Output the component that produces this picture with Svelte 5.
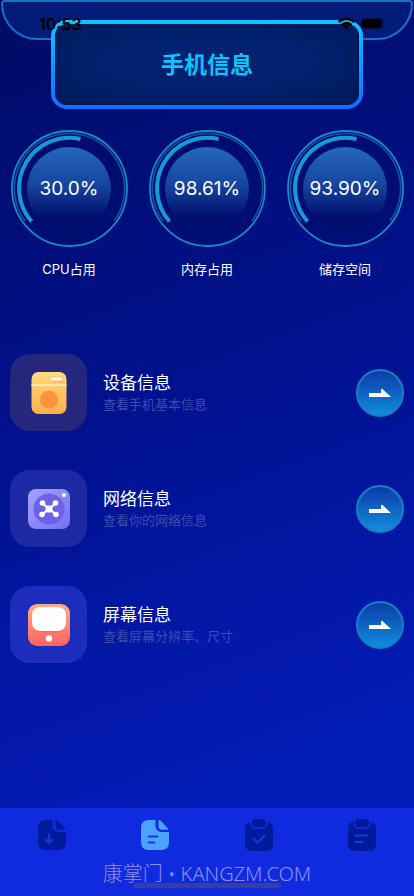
<script>
  const gauges = [
    { value: "30.0%", label: "CPU占用" },
    { value: "98.61%", label: "内存占用" },
    { value: "93.90%", label: "储存空间" },
  ];
  const items = [
    { icon: "device", title: "设备信息", text: "查看手机基本信息" },
    { icon: "network", title: "网络信息", text: "查看你的网络信息" },
    { icon: "screen", title: "屏幕信息", text: "查看屏幕分辨率、尺寸" },
  ];
  const tabs = [
    { icon: "download", label: "下载" },
    { icon: "file", label: "信息" },
    { icon: "check", label: "任务" },
    { icon: "list", label: "清单" },
  ];
  let active = $state("file");
</script>

<div class="page">
  <header>
    <div class="panel"></div>
    <h1>手机信息</h1>
    <div class="status">
      <span class="time">10:53</span>
      <svg width="76" height="14" viewBox="0 0 76 14">
        <g opacity="0.35">
          <circle cx="5" cy="10" r="1" />
          <circle cx="10" cy="10" r="1" />
          <circle cx="15" cy="10" r="1" />
          <circle cx="20" cy="10" r="1" />
        </g>
        <g fill="none" stroke="#000" stroke-width="2.4">
          <path d="M27.500 5Q35.500 -1.500 43.500 5" />
          <path d="M30.500 8Q35.500 4 40.500 8" />
        </g>
        <path d="M33 9.500Q35.500 7.800 38 9.500L35.500 12.500Z" />
        <rect x="50.500" y="1.500" width="22" height="10" rx="3" fill="none" stroke="#000" stroke-opacity="0.35" />
        <rect x="51" y="2" width="20" height="9" rx="2" />
        <path d="M74 5v4q2-2 0-4z" opacity="0.35" />
      </svg>
    </div>
  </header>

  <section class="gauges">
    {#each gauges as gauge}
      <div class="gauge">
        <div class="dial">
          <svg viewBox="0 0 117 117" fill="none">
            <circle cx="58.5" cy="58.5" r="57.5" stroke="#148bc8" stroke-width="1.8" />
            <path d="M14 91A55 55 0 0 1 58.500 3.500A55 55 0 0 1 103 91" stroke="#2873b8" stroke-opacity="0.65" stroke-width="1.6" />
            <path d="M20.500 91.500A50.500 50.500 0 0 1 69.500 9" stroke="#149bd6" stroke-width="4" />
          </svg>
          <span class="value">{gauge.value}</span>
        </div>
        <span class="name">{gauge.label}</span>
      </div>
    {/each}
  </section>

  <ul class="list">
    {#each items as item}
      <li>
        <div class="tile {item.icon}">
          <svg width="42" height="42" viewBox="0 0 42 42">
            {#if item.icon === "device"}
              <defs>
                <linearGradient id="yellow" x1="0" y1="0" x2="0" y2="1">
                  <stop offset="0" stop-color="#ffda7c" />
                  <stop offset="1" stop-color="#fcb14c" />
                </linearGradient>
              </defs>
              <rect x="3.500" width="35" height="42" rx="7" fill="url(#yellow)" />
              <path d="M3.500 13.200h35" stroke="#ffefc4" stroke-width="1.8" />
              <rect x="24" y="8" width="11" height="3" fill="#f9ae4a" opacity="0.5" />
              <rect x="23.500" y="5.500" width="10" height="3" rx="0.6" fill="#fff8e8" />
              <circle cx="21" cy="27.500" r="9" fill="#ff923e" />
            {:else if item.icon === "network"}
              <defs>
                <linearGradient id="purple" x1="0" y1="0" x2="1" y2="1">
                  <stop offset="0" stop-color="#a6a1ff" />
                  <stop offset="1" stop-color="#7470f4" />
                </linearGradient>
              </defs>
              <rect y="1" width="42" height="40" rx="8" fill="url(#purple)" />
              <circle cx="21" cy="21" r="15.500" fill="#6c62e8" />
              <circle cx="36" cy="7" r="2" fill="#fff" />
              <g stroke="#fff" stroke-width="2.200">
                <path d="M14 15L28 26.500M28 15L14 26.500" />
              </g>
              <g fill="#fff">
                <rect x="17.500" y="17.500" width="7" height="7" rx="2" />
                <circle cx="14.500" cy="15" r="2.800" />
                <circle cx="27.500" cy="15" r="2.800" />
                <circle cx="14" cy="26.500" r="2.800" />
                <circle cx="28" cy="26.500" r="2.800" />
              </g>
            {:else}
              <defs>
                <linearGradient id="coral" x1="0" y1="0" x2="0" y2="1">
                  <stop offset="0" stop-color="#ffac86" />
                  <stop offset="1" stop-color="#ff6260" />
                </linearGradient>
              </defs>
              <rect width="42" height="42" rx="9" fill="url(#coral)" />
              <rect x="4.500" y="4.500" width="33" height="24" rx="8" fill="#f35442" opacity="0.45" />
              <rect x="4" y="3" width="34" height="24" rx="8" fill="#fff" />
              <circle cx="21" cy="34.500" r="3.200" fill="#fff" />
            {/if}
          </svg>
        </div>
        <div class="info">
          <h2>{item.title}</h2>
          <p>{item.text}</p>
        </div>
        <button class="go" aria-label={item.title}>
          <svg width="22" height="10" viewBox="0 0 22 10" fill="#fff">
            <path d="M0 5H12V1.500Q13 0 14.500 2L22 9H0Z" />
          </svg>
        </button>
      </li>
    {/each}
  </ul>

  <nav>
    {#each tabs as tab}
      <button
        class="tab"
        class:active={active === tab.icon}
        aria-label={tab.label}
        onclick={() => (active = tab.icon)}
      >
        <svg width="30" height="32" viewBox="0 0 30 32">
          {#if tab.icon === "download" || tab.icon === "file"}
            <path
              fill="currentColor"
              d="M9 1H15.500V6.500Q15.500 13 22 13H29V23Q29 31 21 31H9Q1 31 1 23V9Q1 1 9 1Z"
            />
            <path fill="currentColor" d="M18.500 1.500Q20 1 21 2L28 9.500Q28.500 10.500 27.500 10.800H22Q18.500 10.800 18.500 7Z" />
          {:else}
            <path
              fill="currentColor"
              d="M6 3Q6 10 12 10H18Q24 10 24 3Q29 4 29 10V25Q29 32 22 32H8Q1 32 1 25V10Q1 4 6 3Z"
            />
            <rect x="8" width="14" height="8" rx="3.500" fill="currentColor" />
          {/if}
          <g class="mark">
            {#if tab.icon === "download"}
              <path d="M12 15V24M8.500 20.500L12 24L15.500 20.500" />
            {:else if tab.icon === "file"}
              <path d="M8.500 17.500H17.500M8.500 23.500H14.500" />
            {:else if tab.icon === "check"}
              <path d="M10 20L13.500 23.500L20.500 16.500" />
            {:else}
              <path d="M8.500 16.500H20.500M8.500 23H15.500" />
            {/if}
          </g>
        </svg>
      </button>
    {/each}
    <div class="indicator"></div>
    <p class="brand">康掌门 • KANGZM.COM</p>
  </nav>
</div>

<style>
  :global(body) {
    margin: 0;
  }
  .page {
    min-height: 100vh;
    display: flex;
    flex-direction: column;
    color: #fff;
    font-family: Inter, "Noto Sans CJK SC", sans-serif;
    background: linear-gradient(160deg, #000b64 0%, #001290 45%, #041cb8 85%, #041cb8 100%);
  }
  h1,
  h2,
  p,
  ul {
    margin: 0;
    padding: 0;
    font-weight: 400;
  }
  header {
    position: relative;
    padding: 20px 51px 0;
  }
  .panel {
    position: absolute;
    inset: 0 1px auto;
    height: 40px;
    box-sizing: border-box;
    border: 2px solid #1471c8;
    border-radius: 4px 4px 38px 38px;
    background: #001c78;
  }
  h1 {
    position: relative;
    height: 89px;
    box-sizing: border-box;
    border: 4px solid transparent;
    border-radius: 16px;
    background:
      radial-gradient(ellipse, #02247880 40%, #001a5480 100%) padding-box,
      linear-gradient(#001f6c, #001c64) padding-box,
      linear-gradient(#12c4ff, #0f6cff) border-box;
    box-shadow: inset 0 0 14px #00104066;
    color: #0cc4fc;
    font-size: 23px;
    font-weight: 600;
    line-height: 82px;
    text-align: center;
  }
  .status {
    position: absolute;
    inset: 14px 27px auto 39px;
    display: flex;
    justify-content: space-between;
    align-items: center;
    color: #000;
  }
  .time {
    font-size: 16px;
    font-weight: 600;
    line-height: 20px;
  }
  .gauges {
    display: grid;
    grid-template-columns: repeat(3, 1fr);
    margin-top: 21px;
  }
  .gauge {
    display: flex;
    flex-direction: column;
    align-items: center;
    gap: 12px;
  }
  .dial {
    width: 117px;
    height: 117px;
    display: grid;
    place-items: center;
    border-radius: 50%;
    background: #000b6680;
  }
  .dial > * {
    grid-area: 1 / 1;
  }
  .dial svg {
    width: 100%;
  }
  .value {
    width: 84px;
    border-radius: 50%;
    background: linear-gradient(#2468b8, #1645a0 45%, #000d6c 85%);
    font-size: 19px;
    line-height: 84px;
    text-align: center;
  }
  .name {
    font-size: 13px;
    line-height: 20px;
  }
  .list {
    display: flex;
    flex-direction: column;
    gap: 39px;
    margin: 75px 10px 40px;
    list-style: none;
  }
  li {
    display: flex;
    align-items: center;
  }
  .tile {
    width: 77px;
    height: 77px;
    display: grid;
    place-items: center;
    border-radius: 20px;
  }
  .device {
    background: #24277c;
  }
  .network {
    background: #1c28a4;
  }
  .screen {
    background: #1c2cbc;
  }
  .info {
    flex: 1;
    margin-left: 16px;
  }
  h2 {
    font-size: 17px;
    line-height: 22px;
  }
  p {
    color: #3c4cb0;
    font-size: 13px;
    line-height: 20px;
  }
  .go {
    width: 48px;
    height: 48px;
    display: grid;
    place-items: center;
    padding: 0;
    border: 2px solid #1680c4;
    border-radius: 50%;
    background: linear-gradient(#0b3ca8, #128cdc);
  }
  nav {
    position: relative;
    height: 88px;
    margin-top: auto;
    display: grid;
    grid-template-columns: repeat(4, 1fr);
    align-items: start;
    background: #102ae0;
  }
  .tab {
    padding: 11px 0 0;
    border: 0;
    background: none;
    color: #001a9c;
  }
  .tab svg {
    display: block;
    margin: 0 auto;
  }
  .active {
    color: #48a4ff;
  }
  .mark {
    fill: none;
    stroke: #1838dc;
    stroke-width: 2;
    stroke-linecap: round;
    stroke-linejoin: round;
  }
  .indicator {
    position: absolute;
    inset: auto 133px 8px;
    height: 5px;
    border-radius: 3px;
    background: #36409c;
  }
  .brand {
    position: absolute;
    inset: auto 0 8px;
    color: #8c90ec;
    font-family: "Noto Sans", "Noto Sans CJK SC", sans-serif;
    font-size: 20px;
    font-weight: 300;
    line-height: 28px;
    text-align: center;
  }
</style>
